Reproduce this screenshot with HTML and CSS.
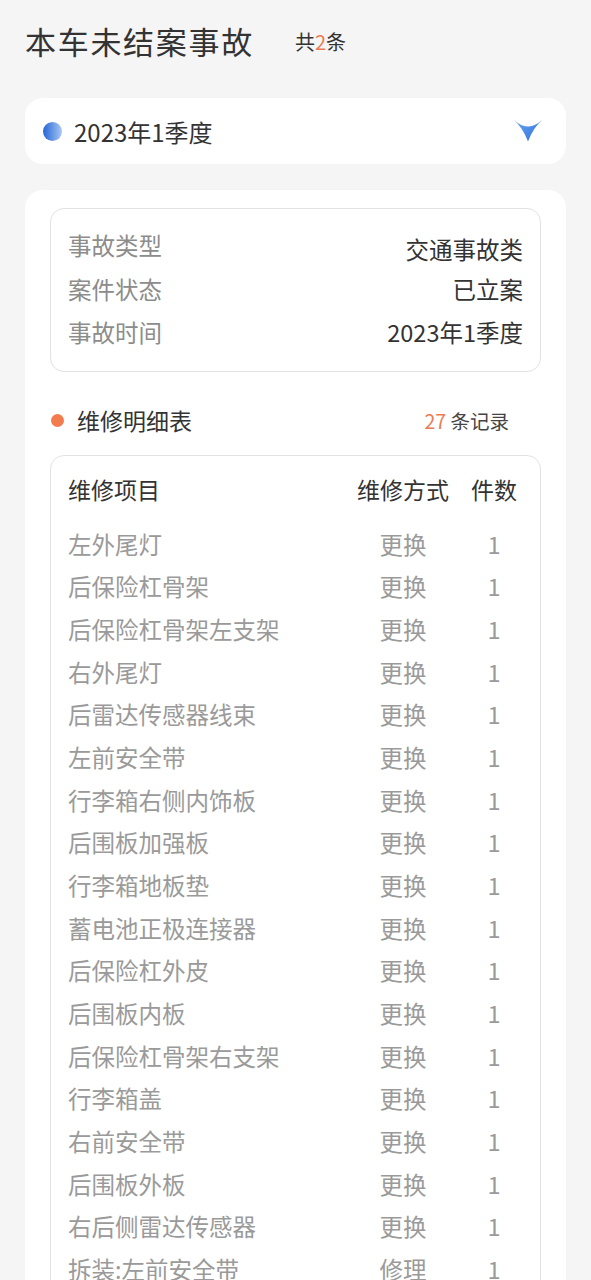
FILE: index.html
```html
<!DOCTYPE html>
<html lang="zh-CN">
<head>
    <meta charset="UTF-8">
    <meta name="viewport" content="width=device-width, initial-scale=1.0">
    <title>本车未结案事故</title>
    <link rel="stylesheet" href="styles.css">
</head>
<body>
    <div class="page">
        <!-- watermark layer -->
        <div class="watermark wm-1">车信盟</div>
        <div class="watermark wm-2">车信盟</div>
        <div class="watermark wm-3">车信盟</div>
        <div class="watermark wm-4">车信盟</div>

        <div class="page-header">
            <h1 class="page-title">本车未结案事故</h1>
            <span class="total">共<em>2</em>条</span>
        </div>

        <div class="period-select">
            <span class="period-dot"></span>
            <span class="period-text">2023年1季度</span>
            <svg class="period-arrow" width="28" height="22" viewBox="0 0 28 22">
                <defs>
                    <linearGradient id="arrowGrad" x1="0" y1="0" x2="1" y2="1">
                        <stop offset="0" stop-color="#6aa6f2"/>
                        <stop offset="1" stop-color="#2d6fdc"/>
                    </linearGradient>
                </defs>
                <path d="M0 0 Q8 7 14 6.5 Q20 7 28 0 Q19 8 14 21.5 Q9 8 0 0 Z" fill="url(#arrowGrad)"/>
            </svg>
        </div>

        <div class="card">
            <div class="info-box">
                <div class="info-row first">
                    <span class="info-label">事故类型</span>
                    <span class="info-value">交通事故类</span>
                </div>
                <div class="info-row">
                    <span class="info-label">案件状态</span>
                    <span class="info-value">已立案</span>
                </div>
                <div class="info-row">
                    <span class="info-label">事故时间</span>
                    <span class="info-value">2023年1季度</span>
                </div>
            </div>

            <div class="section-head">
                <span class="section-dot"></span>
                <span class="section-title">维修明细表</span>
                <span class="section-count"><em>27</em> 条记录</span>
            </div>

            <div class="repair-table">
                <div class="repair-row head">
                    <span>维修项目</span>
                    <span class="col-mid">维修方式</span>
                    <span class="col-end">件数</span>
                </div>
                <div class="repair-row"><span>左外尾灯</span><span class="col-mid">更换</span><span class="col-end">1</span></div>
                <div class="repair-row"><span>后保险杠骨架</span><span class="col-mid">更换</span><span class="col-end">1</span></div>
                <div class="repair-row"><span>后保险杠骨架左支架</span><span class="col-mid">更换</span><span class="col-end">1</span></div>
                <div class="repair-row"><span>右外尾灯</span><span class="col-mid">更换</span><span class="col-end">1</span></div>
                <div class="repair-row"><span>后雷达传感器线束</span><span class="col-mid">更换</span><span class="col-end">1</span></div>
                <div class="repair-row"><span>左前安全带</span><span class="col-mid">更换</span><span class="col-end">1</span></div>
                <div class="repair-row"><span>行李箱右侧内饰板</span><span class="col-mid">更换</span><span class="col-end">1</span></div>
                <div class="repair-row"><span>后围板加强板</span><span class="col-mid">更换</span><span class="col-end">1</span></div>
                <div class="repair-row"><span>行李箱地板垫</span><span class="col-mid">更换</span><span class="col-end">1</span></div>
                <div class="repair-row"><span>蓄电池正极连接器</span><span class="col-mid">更换</span><span class="col-end">1</span></div>
                <div class="repair-row"><span>后保险杠外皮</span><span class="col-mid">更换</span><span class="col-end">1</span></div>
                <div class="repair-row"><span>后围板内板</span><span class="col-mid">更换</span><span class="col-end">1</span></div>
                <div class="repair-row"><span>后保险杠骨架右支架</span><span class="col-mid">更换</span><span class="col-end">1</span></div>
                <div class="repair-row"><span>行李箱盖</span><span class="col-mid">更换</span><span class="col-end">1</span></div>
                <div class="repair-row"><span>右前安全带</span><span class="col-mid">更换</span><span class="col-end">1</span></div>
                <div class="repair-row"><span>后围板外板</span><span class="col-mid">更换</span><span class="col-end">1</span></div>
                <div class="repair-row"><span>右后侧雷达传感器</span><span class="col-mid">更换</span><span class="col-end">1</span></div>
                <div class="repair-row"><span>拆装:左前安全带</span><span class="col-mid">修理</span><span class="col-end">1</span></div>
            </div>
        </div>
    </div>
</body>
</html>
```

FILE: styles.css
```css
body {
    margin: 0;
    padding: 0;
    background-color: #f5f5f5;
    font-family: "Noto Sans CJK SC", "Noto Sans", sans-serif;
    color: #333;
}
em {
    font-style: normal;
    color: #ec7b52;
}
.page {
    position: relative;
    padding: 21px 25px 40px;
    overflow: hidden;
}

/* faint watermark text over the page */
.watermark {
    position: absolute;
    font-size: 36px;
    font-weight: 700;
    color: rgba(0, 0, 0, 0.025);
    transform: rotate(-22deg);
    pointer-events: none;
    z-index: 5;
    white-space: nowrap;
}
.wm-1 { left: 145px; top: 55px; }
.wm-2 { left: 572px; top: 72px; }
.wm-3 { left: 574px; top: 518px; }
.wm-4 { left: 574px; top: 948px; }

.page-header {
    display: flex;
    align-items: center;
    height: 40px;
}
.page-title {
    margin: 0;
    font-size: 31px;
    font-weight: 400;
    letter-spacing: 1.7px;
    line-height: 40px;
    color: #333;
}
.total {
    margin-left: 41px;
    font-size: 20px;
    color: #333;
}

.period-select {
    display: flex;
    align-items: center;
    height: 66px;
    margin-top: 37px;
    padding: 0 24px 0 18px;
    background: #fff;
    border-radius: 18px;
}
.period-dot {
    width: 19px;
    height: 19px;
    border-radius: 50%;
    background: linear-gradient(90deg, #2465d6, #a9c8f4);
}
.period-text {
    margin-left: 12px;
    font-size: 24px;
    flex-grow: 1;
}
.period-arrow {
    display: block;
}

.card {
    margin-top: 26px;
    padding: 18px 25px 30px;
    background: #fff;
    border-radius: 18px;
}
.info-box {
    padding: 22px 17px 17px;
    border: 1px solid #e2e2e2;
    border-radius: 14px;
}
.info-row {
    display: flex;
    justify-content: space-between;
    line-height: 43px;
    font-size: 23.5px;
}
.info-row.first {
    line-height: 37px;
}
.info-row.first .info-label {
    position: relative;
    top: -4px;
}
.info-label {
    color: #8c8c8c;
}
.info-value {
    color: #333;
}

.section-head {
    display: flex;
    align-items: center;
    margin: 32px 0 19px;
    height: 32px;
}
.section-dot {
    width: 13px;
    height: 13px;
    margin-left: 1px;
    border-radius: 50%;
    background: #f37c4f;
}
.section-title {
    margin-left: 13px;
    font-size: 23px;
    flex-grow: 1;
}
.section-count {
    margin-right: 32px;
    font-size: 19.5px;
    color: #444;
}

.repair-table {
    padding: 12px 0 10px;
    border: 1px solid #e2e2e2;
    border-radius: 14px;
}
.repair-row {
    display: grid;
    grid-template-columns: 1fr 94px 48px;
    column-gap: 20px;
    padding: 0 22px 0 17px;
    line-height: 42.65px;
    font-size: 23.5px;
    color: #9a9a9a;
    white-space: nowrap;
}
.repair-row.head {
    font-size: 23px;
    color: #333;
    margin-bottom: 12px;
}
.col-mid, .col-end {
    text-align: center;
}
```
